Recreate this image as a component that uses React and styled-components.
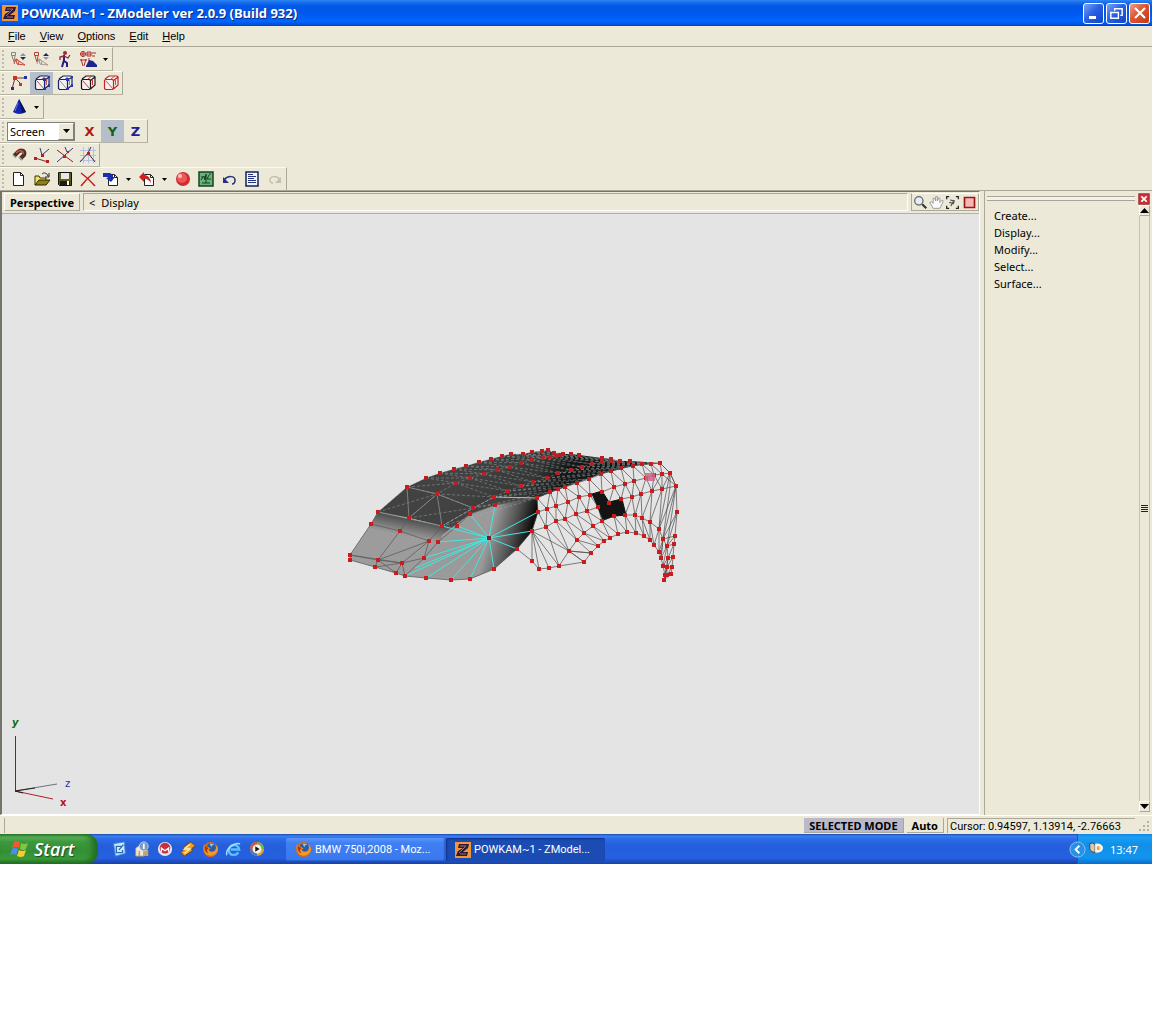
import styled, { createGlobalStyle } from "styled-components";

const GlobalStyle = createGlobalStyle`
  * {
    box-sizing: border-box;
  }
  body {
    margin: 0;
    background: #ffffff;
    font-family: "Noto Sans", "Open Sans", sans-serif;
    font-size: 11px;
    color: #000000;
  }
  button,
  select {
    font: inherit;
    color: inherit;
    margin: 0;
    padding: 0;
    border: 0;
    background: none;
    border-radius: 0;
  }
  svg {
    display: block;
    flex: none;
  }
`;

const Window = styled.div`
  display: flex;
  flex-direction: column;
  background: #ece9d8;
`;

const TitleBar = styled.header`
  display: flex;
  align-items: center;
  height: 26px;
  padding: 0 2px 0 2px;
  gap: 3px;
  background: linear-gradient(#2a86f2 0, #1e72ee 2px, #0058e6 6px, #0058ee 14px, #0066ff 21px, #0054e0 24px, #0040c0 26px);
`;

const Title = styled.h1`
  flex: 1;
  margin: 0;
  font-family: "Noto Sans", sans-serif;
  font-size: 13px;
  font-weight: 700;
  color: #ffffff;
  text-shadow: 1px 1px 0 #0a2a86;
  white-space: nowrap;
`;

const Caption = styled.div`
  display: flex;
  gap: 2px;
`;

const CaptionButton = styled.button`
  display: flex;
  align-items: center;
  justify-content: center;
  width: 21px;
  height: 21px;
  border: 1px solid #ffffff;
  border-radius: 3px;
  background: ${(props) =>
    props.$close
      ? "linear-gradient(135deg, #eda088, #dc5530 45%, #c03c14)"
      : "linear-gradient(135deg, #7ba4f5, #2a62e4 45%, #0f44c8)"};
`;

const MenuBar = styled.nav`
  display: flex;
  height: 21px;
  padding: 0 0 1px 1px;
  font-family: "Liberation Sans", Arial, sans-serif;
  border-bottom: 1px solid #aca899;
`;

const MenuItem = styled.button`
  padding: 0 7px;
`;

const Toolbars = styled.div`
  display: flex;
  flex-direction: column;
  align-items: flex-start;
  height: 143px;
`;

const Toolbar = styled.div`
  display: flex;
  align-items: center;
  height: 24px;
  flex: none;
  border-right: 1px solid #aca899;
  border-bottom: 1px solid #b8b4a4;
  border-top: 1px solid #fbfaf4;
`;

const Grip = styled.span`
  width: 7px;
  height: 20px;
  background: radial-gradient(circle at 3px 2px, #c0bcac 1px, transparent 1px);
  background-size: 7px 4px;
`;

const Tool = styled.button`
  display: flex;
  align-items: center;
  justify-content: center;
  width: 23px;
  height: 22px;
  background: ${(props) => (props.$active ? "#b5bfcc" : "none")};
`;

const Drop = styled.button`
  display: flex;
  align-items: center;
  justify-content: center;
  width: 13px;
  height: 22px;
`;

const Axis = styled.span`
  font-family: "DejaVu Sans", sans-serif;
  font-size: 13px;
  font-weight: 700;
  color: ${(props) => props.$color};
`;

const SelectBox = styled.div`
  display: flex;
  position: relative;
  width: 68px;
  height: 19px;
  margin-right: 3px;
  border: 1px solid #808080;
  background: #ffffff;
`;

const Select = styled.select`
  appearance: none;
  width: 100%;
  padding: 0 0 0 2px;
  outline: none;
`;

const SelectArrow = styled.span`
  position: absolute;
  right: 0;
  top: 0;
  bottom: 0;
  display: flex;
  align-items: center;
  justify-content: center;
  width: 16px;
  pointer-events: none;
  background: #ece9d8;
  border: 1px solid;
  border-color: #ffffff #808080 #808080 #ffffff;
`;

const Main = styled.main`
  display: flex;
  height: 625px;
  border-top: 1px solid #aca899;
`;

const View = styled.section`
  flex: 1;
  min-width: 0;
  display: flex;
  flex-direction: column;
  border: 1px solid #76746a;
  border-left-width: 2px;
  border-right-color: #ffffff;
  border-bottom-color: #ffffff;
  margin-right: 4px;
`;

const ViewHeader = styled.div`
  display: flex;
  gap: 3px;
  height: 22px;
  padding: 1px 0 2px 2px;
  border-bottom: 1px solid #b4b1a4;
`;

const ViewName = styled.button`
  width: 76px;
  border: 1px solid;
  border-color: #ffffff #aca899 #aca899 #ffffff;
  font-weight: 700;
`;

const ViewPath = styled.div`
  flex: 1;
  display: flex;
  align-items: center;
  gap: 6px;
  padding-left: 5px;
  border: 1px solid;
  border-color: #aca899 #ffffff #ffffff #aca899;
`;

const ViewTools = styled.div`
  display: flex;
  border: 1px solid;
  border-color: #ffffff #aca899 #aca899 #aca899;
`;

const ViewTool = styled.button`
  display: flex;
  align-items: center;
  justify-content: center;
  width: ${(props) => (props.$wide ? 18 : 16)}px;
`;

const Canvas = styled.div`
  flex: 1;
  position: relative;
  overflow: hidden;
  background: #e4e4e4;
`;

const Model = styled.svg`
  position: absolute;
  left: 338px;
  top: 226px;
`;

const AxisMark = styled.svg`
  position: absolute;
  left: 0;
  bottom: 0;
`;

const Side = styled.aside`
  display: flex;
  width: 168px;
  flex: none;
  padding: 2px 2px 3px 0;
  border-left: 1px solid #aca899;
`;

const SideBody = styled.div`
  flex: 1;
  padding: 3px 3px 0 2px;
`;

const SideGrip = styled.div`
  height: 5px;
  border: 1px solid #a8a598;
  border-width: 1px 0;
  background: #f4f2e8;
`;

const Commands = styled.ul`
  list-style: none;
  margin: 6px 0 0;
  padding: 0 0 0 7px;
`;

const Command = styled.button`
  display: block;
  height: 17px;
  line-height: 17px;
`;

const Scroll = styled.div`
  display: flex;
  flex-direction: column;
  justify-content: space-between;
  align-items: center;
  width: 12px;
`;

const ScrollTrack = styled.div`
  flex: 1;
  display: flex;
  flex-direction: column;
  justify-content: space-between;
  align-items: center;
  width: 11px;
  border: 1px solid #c6c3b4;
  border-width: 0 1px;
`;

const ScrollButton = styled.button`
  display: flex;
  align-items: center;
  justify-content: center;
  width: 11px;
  height: 11px;
  border: 1px solid;
  border-color: #ffffff #aca899 #aca899 #ffffff;
`;

const StatusBar = styled.footer`
  display: flex;
  height: 19px;
  gap: 3px;
  padding: 2px 2px 1px 4px;
  border-top: 1px solid #ffffff;
`;

const StatusHint = styled.div`
  flex: 1;
  border-left: 1px solid #aca899;
`;

const StatusMode = styled.button`
  padding: 0 5px;
  line-height: 15px;
  font-weight: 700;
  background: ${(props) => (props.$on ? "#b9b9c9" : "none")};
  border-right: 1px solid #aca899;
  border-bottom: 1px solid #aca899;
`;

const StatusCursor = styled.div`
  width: 188px;
  padding-left: 2px;
  line-height: 15px;
  font-family: Roboto, "Liberation Sans", sans-serif;
  white-space: nowrap;
  border-left: 1px solid #aca899;
  border-top: 1px solid #aca899;
`;

const Taskbar = styled.footer`
  display: flex;
  height: 30px;
  color: #ffffff;
  background: linear-gradient(#1c49a8 0, #3a80f0 2px, #2d6be8 5px, #245edb 12px, #2460e0 24px, #1941a5 30px);
`;

const Start = styled.button`
  display: flex;
  align-items: center;
  gap: 5px;
  width: 98px;
  padding-left: 10px;
  border-radius: 0 12px 12px 0;
  font-family: "Open Sans", sans-serif;
  font-size: 18px;
  line-height: 28px;
  font-style: italic;
  font-weight: 600;
  text-shadow: 1px 1px 1px #1c4a1c;
  background: linear-gradient(#2f7a2f 0, #5fb55f 3px, #3c983c 8px, #348f34 18px, #3a9c3a 25px, #256b25 30px);
  box-shadow: inset -5px 0 6px #226b22;
`;

const QuickLaunch = styled.div`
  display: flex;
  align-items: center;
  width: 188px;
  padding-left: 9px;
`;

const QuickButton = styled.button`
  display: flex;
  align-items: center;
  justify-content: center;
  width: 23px;
  height: 24px;
`;

const Task = styled.button`
  display: flex;
  align-items: center;
  gap: 3px;
  width: 159px;
  height: 23px;
  margin: 4px 1px 0 0;
  padding-left: 9px;
  border-radius: 2px;
  font-family: Roboto, sans-serif;
  color: #ffffff;
  white-space: nowrap;
  background: ${(props) => (props.$active ? "#1b4cb4" : "linear-gradient(#5a97fa, #3f7ff2 5px, #3a78ee)")};
  box-shadow: ${(props) => (props.$active ? "inset 1px 1px 2px #10328a" : "inset -1px -1px 1px #2a5fd0")};
`;

const Tray = styled.div`
  display: flex;
  align-items: center;
  margin-left: auto;
`;

const TrayFill = styled.div`
  display: flex;
  align-items: center;
  gap: 6px;
  align-self: stretch;
  width: 75px;
  margin-left: -9px;
  padding-left: 10px;
  border-left: 1px solid #0f5cc0;
  background: linear-gradient(#1280e0 0, #1aa0f4 3px, #1290e8 10px, #1294ee 24px, #0c6cc8 30px);
`;

const TrayToggle = styled.button`
  display: flex;
  position: relative;
  z-index: 1;
`;

function Icon({ size = 18, children }) {
  return (
    <svg width={size} height={size} viewBox="0 0 18 18" fill="none" aria-hidden="true">
      {children}
    </svg>
  );
}

const Triangle = () => (
  <svg width="5" height="3" viewBox="0 0 5 3" aria-hidden="true">
    <path d="M0 0h5L2.500 3z" fill="#000" />
  </svg>
);

const ScrollArrow = ({ down }) => (
  <svg width="9" height="5" viewBox="0 0 9 5" aria-hidden="true">
    <path d={down ? "M0 0h9L4.500 5z" : "M0 5h9L4.500 0z"} fill="#000" />
  </svg>
);

const ZLogo = () => (
  <svg width="16" height="16" viewBox="0 0 16 16" aria-hidden="true">
    <rect width="16" height="16" fill="#f0953a" />
    <path d="M4 2h10l-1 4-5 4h5l-1 4H1l2-5 5-3H3z" fill="#2a1a3c" />
    <path d="M5 4h6L4 11M5 12h6" stroke="#b06c4c" fill="none" />
  </svg>
);

const Pivot = ({ pin, wedge, up, down }) => (
  <Icon>
    <path d="M1.500 2.500h4v3h-4zM2 6l2 6 1-6" stroke={pin} />
    <path d="M4 14l2-5 2 1M6 9l9 6-8-1zM8 15l1-4" stroke={wedge} />
    <path d="M13 3l3 3h-6z" fill={up} />
    <path d="M10 7h6l-3 3z" fill={down} />
  </Icon>
);

const Cube = ({ edge, front, corner }) => (
  <Icon>
    <path d="M2.500 6.500l1-1h7l1 1v8l-1 1h-7l-1-1zM3 5l4-3h8l1 1-4.500 3.500M16 3v8l-4.500 4" fill="#f4f2ee" stroke={edge} strokeWidth="1.200" />
    <path d="M4 7l7 8M9 5l4-3M13.500 5v6" stroke={front} />
    {corner && <path d="M10 4h3v3h-3zM15 10h2v3h-2zM15 2h2v2h-2zM10 14h3v2h-3z" fill={corner} />}
  </Icon>
);

const Page = ({ arrow }) => (
  <>
    <path d="M6.500 4.500h6l3 3v8h-9z" fill="#fff" stroke="#222" />
    <path d="M12.500 4.500v3h3" stroke="#222" />
    <path d={arrow.d} fill={arrow.fill} />
  </>
);

const Firefox = () => (
  <Icon size={17}>
    <circle cx="9" cy="9" r="8" fill="#e06818" />
    <circle cx="10" cy="7" r="5" fill="#2c5ca8" />
    <path d="M8 3c2-1 4 0 5 1-2 0-3 1-3 3z" fill="#8fc8e8" />
    <path d="M2 4c1 2 3 2 4 2l3 2-2 1c1 3 4 3 7 1 1-2 1-4 0-6 3 2 4 6 1 9-4 4-10 3-12-1-1-3-2-5-1-8z" fill="#f39a26" />
    <path d="M3 5l3 2 1 1-2 2 2 3c-4-1-5-5-4-8z" fill="#b03c10" />
  </Icon>
);

const Explorer = () => (
  <Icon size={17}>
    <path d="M14 12c-2 4-9 4-10-2 0-7 10-8 11-1H6" stroke="#5cc0ff" strokeWidth="2.500" />
    <path d="M2 15C0 9 10 1 16 3" stroke="#a8e0ff" strokeWidth="1.500" />
  </Icon>
);

const Flag = () => (
  <svg width="19" height="18" viewBox="0 0 19 18" aria-hidden="true">
    <path d="M4 2q3-2 6 0L9 8Q6 6 2 8z" fill="#f05a28" />
    <path d="M11 3q3 2 7 0l-2 6q-3 2-6 0z" fill="#86c440" />
    <path d="M2 9q3-2 6 0l-2 6q-3-2-6 0z" fill="#4a8cf0" />
    <path d="M9 10q3 2 7 0l-2 6q-3 2-7 0z" fill="#f8cc30" />
  </svg>
);

// hood rows, nose to windscreen
const hoodRows = [
  [[378, 512], [407, 487], [426, 478], [440, 473], [454, 469], [466, 466], [479, 462], [491, 459], [502, 456], [511, 454], [523, 454], [532, 452], [542, 451], [548, 450]],
  [[409, 518], [437, 494], [456, 483], [470, 478], [484, 474], [497, 470], [510, 467], [521, 463], [532, 460], [543, 458], [550, 457], [556, 456], [560, 455], [563, 454]],
  [[442, 526], [473, 508], [494, 497], [508, 491], [521, 486], [533, 482], [547, 478], [558, 473], [571, 470], [582, 467], [592, 464], [602, 462], [611, 461], [620, 461]],
  [[494, 497], [537, 498], [550, 492], [565, 487], [577, 483], [589, 479], [601, 474], [611, 471], [621, 468], [633, 466], [642, 464], [651, 464], [660, 463]],
];

const windscreenEdge = [[548, 450], [554, 453], [563, 454], [571, 454], [579, 455], [602, 458], [611, 459], [620, 461], [630, 461], [660, 463]];

// fender rows, bonnet line down to the wheel arch
const fenderRows = [
  [[537, 498], [550, 492], [558, 489], [565, 487], [577, 483], [589, 479], [601, 474], [611, 471], [621, 468], [633, 466], [642, 464], [651, 464], [660, 463], [670, 473]],
  [[538, 512], [547, 509], [556, 506], [568, 502], [579, 497], [590, 495], [602, 492], [614, 487], [625, 484], [634, 481], [646, 478], [654, 475], [662, 474], [670, 473]],
  [[532, 531], [546, 527], [556, 521], [565, 519], [576, 514], [587, 511], [598, 507], [609, 503], [621, 499], [632, 497], [641, 494], [652, 491], [662, 489], [676, 486]],
];

const upperArch = [[569, 551], [577, 540], [584, 533], [593, 526], [602, 521], [614, 516], [625, 515], [635, 515], [642, 518], [650, 522], [659, 529], [663, 539], [667, 546], [668, 558], [667, 567], [667, 575]];
const lowerArch = [[584, 562], [591, 553], [598, 546], [604, 541], [610, 538], [618, 534], [627, 532], [636, 533], [644, 536], [650, 540], [654, 545], [659, 552], [661, 558], [663, 566], [665, 575], [664, 580]];
const rearEdge = [[670, 473], [676, 486], [677, 512], [675, 536], [674, 544], [673, 557], [672, 567], [671, 574], [664, 580]];
const frontEdge = [[517, 549], [532, 561], [539, 569], [549, 568], [559, 566], [584, 562]];

const nose = [[350, 555], [350, 560], [371, 524], [400, 531], [429, 541], [438, 542], [457, 526], [470, 514], [495, 505], [378, 560], [375, 567], [402, 563], [424, 558], [396, 573], [405, 576], [426, 578], [451, 580], [470, 579], [494, 569], [517, 549]];

const fanEnds = [[442, 526], [457, 526], [438, 542], [424, 558], [405, 576], [426, 578], [451, 580], [470, 579], [494, 569], [517, 549], [532, 531], [538, 512], [495, 505], [470, 514], [415, 568]];

const line = (points) => "M" + points.map((p) => p.join(" ")).join("L");

const strip = (a, b) =>
  a
    .slice(0, b.length)
    .map((p, i) => line([p, b[i]]) + (b[i + 1] ? line([p, b[i + 1]]) : ""))
    .join("");

const mesh = (rows) => rows.map(line).join("") + rows.slice(1).map((row, i) => strip(rows[i], row)).join("");

const dots = [...hoodRows, ...fenderRows, upperArch, lowerArch, rearEdge, frontEdge, nose, windscreenEdge].flat();

const noseLines =
  "M350 560L350 555L371 524L378 512M371 524L400 531L429 541L442 526M400 531L409 518M400 531L378 560L350 555M350 560L375 567L396 573L405 576L426 578L451 580L470 579L494 569L517 549" +
  "M378 560L402 563L424 558L429 541L378 560L375 567M378 560L396 573L402 563L429 541M402 563L405 576L424 558L438 542L457 526L470 514L495 505L537 498M350 555L402 563M375 567L402 563";

const fenderLines =
  "M532 531L517 549M532 531L532 561M532 531L539 569M532 531L549 568M532 531L559 566M532 531L569 551M546 527L559 566L569 551L584 562M546 527L569 551L591 553M556 521L569 551M556 521L577 540M565 519L577 540M565 519L584 533M576 514L584 533M576 514L593 526M587 511L593 526M587 511L602 521M598 507L602 521" +
  "M621 499L625 515M632 497L625 515M632 497L635 515M641 494L635 515M641 494L642 518M652 491L642 518M652 491L650 522M662 489L650 522M662 489L659 529L676 486L663 539L677 512L667 546L675 536M663 539L675 536M667 546L674 544L668 558L673 557L667 567L672 567L664 580" +
  "M662 474L652 491M670 473L659 529M662 489L670 473L670 487M676 486L667 546M670 487L663 539L661 558";

function CarMesh() {
  return (
    <Model width="346" height="150" viewBox="340 440 346 150" role="img" aria-label="Car fender mesh">
      <defs>
        <linearGradient id="hood" gradientUnits="userSpaceOnUse" x1="470" y1="470" x2="545" y2="510">
          <stop offset="0" stopColor="#424242" />
          <stop offset="0.700" stopColor="#363636" />
          <stop offset="1" stopColor="#161616" />
        </linearGradient>
        <linearGradient id="nose" gradientUnits="userSpaceOnUse" x1="410" y1="516" x2="406" y2="536">
          <stop offset="0" stopColor="#424242" />
          <stop offset="1" stopColor="#9c9c9c" />
        </linearGradient>
        <linearGradient id="corner" gradientUnits="userSpaceOnUse" x1="490" y1="532" x2="534" y2="544">
          <stop offset="0" stopColor="#111" stopOpacity="0" />
          <stop offset="0.450" stopColor="#111" stopOpacity="0.500" />
          <stop offset="0.850" stopColor="#0c0c0c" />
        </linearGradient>
      </defs>
      <path d="M350 560L350 555L371 524L378 512L442 526L473 508L494 497L537 498L538 512L532 531L517 549L494 569L470 579L451 580L426 578L405 576L375 567Z" fill="url(#nose)" />
      <path d="M442 535L470 514L495 505L537 498L538 512L532 531L517 549L494 569L470 579L430 576Z" fill="#9a9a9a" />
      <path d="M495 505L537 498L538 512L532 531L517 549L494 569L470 579L470 514Z" fill="url(#corner)" />
      <path d={line([...hoodRows[0], ...windscreenEdge, [633, 466], [601, 474], [565, 487], [537, 498], [494, 497], [473, 508], [442, 526], [409, 518]]) + "Z"} fill="url(#hood)" />
      <path d={mesh(hoodRows)} fill="none" stroke="#a4bab8" strokeOpacity="0.600" strokeWidth="0.700" strokeDasharray="3 2" />
      <path d="M407 487L409 518M409 518L437 494M437 494L442 526M378 512L442 526M437 494L473 508M437 494L407 487" fill="none" stroke="#8a9090" strokeWidth="0.800" />
      <path d="M494 497L537 498" fill="none" stroke="#c8c8c8" strokeWidth="0.800" />
      <path d={noseLines} fill="none" stroke="#5d5d5d" strokeWidth="0.800" />
      <path d={mesh(fenderRows) + line(upperArch) + line(lowerArch) + strip(upperArch, lowerArch) + line(rearEdge) + line(frontEdge) + fenderLines} fill="none" stroke="#4c4c4c" strokeWidth="0.700" />
      <path d="M592 494L602 491L609 502L622 499L626 515L614 516L603 520L598 507Z" fill="#141414" stroke="#141414" />
      <path d={fanEnds.map((p) => line([[489, 538], p])).join("")} stroke="#40e8e0" fill="none" strokeWidth="1" />
      {dots.map(([x, y], i) => (
        <rect key={i} x={x - 2} y={y - 2} width="4" height="4" fill={y < 486 && x < 640 ? "#b42024" : "#cc1a1e"} />
      ))}
      <path d="M645 473h10v8h-10z" fill="#c8688c" fillOpacity="0.850" />
      <path d="M487 536h4v4h-4z" fill="#7a1c28" />
    </Model>
  );
}

const menus = ["File", "View", "Options", "Edit", "Help"];
const commands = ["Create...", "Display...", "Modify...", "Select...", "Surface..."];

const App = () => {
  return (
    <>
      <GlobalStyle />
      <Window>
        <TitleBar>
          <ZLogo />
          <Title>POWKAM~1 - ZModeler ver 2.0.9 (Build 932)</Title>
          <Caption>
            <CaptionButton aria-label="Minimize">
              <Icon><path d="M4 12h7v3H4z" fill="#fff" /></Icon>
            </CaptionButton>
            <CaptionButton aria-label="Restore">
              <Icon size={17}>
                <path d="M7 6V4h8v7h-2M7 4h8" stroke="#fff" strokeWidth="1.500" />
                <path d="M3 8h8v6H3zM3 8h8" stroke="#fff" strokeWidth="1.500" />
              </Icon>
            </CaptionButton>
            <CaptionButton $close aria-label="Close">
              <Icon><path d="M4 4l10 10M14 4L4 14" stroke="#fff" strokeWidth="2.200" /></Icon>
            </CaptionButton>
          </Caption>
        </TitleBar>

        <MenuBar>
          {menus.map((name) => (
            <MenuItem key={name}>
              <u>{name[0]}</u>
              {name.slice(1)}
            </MenuItem>
          ))}
        </MenuBar>

        <Toolbars>
          <Toolbar>
            <Grip />
            <Tool aria-label="Local pivot"><Pivot pin="#8c8478" wedge="#c84838" up="#8a93a8" down="#1c2c60" /></Tool>
            <Tool aria-label="World pivot"><Pivot pin="#b84030" wedge="#a89890" up="#1c2850" down="#9a9aa4" /></Tool>
            <Tool aria-label="Animate">
              <Icon>
                <circle cx="9" cy="3" r="2" fill="#a02830" />
                <path d="M8 5v6l3 2v4M8 10l-2 7" stroke="#2a1c80" strokeWidth="2" />
                <path d="M8 6l4 2 2-3M8 6L4 7v3" stroke="#8c2848" strokeWidth="1.300" />
              </Icon>
            </Tool>
            <Tool aria-label="Objects">
              <Icon>
                <circle cx="4" cy="4" r="2.500" stroke="#b02828" />
                <path d="M1 4h6M4 1v6M8 2h4v4H8zM8 4h4M13 3h4M13 6h3M2 9l2 7M7 9l-2 7M1 10h7M10 8v3" stroke="#b02828" />
                <path d="M7 16l3-6 4 1 4 4v2H7z" fill="#1c2490" />
              </Icon>
            </Tool>
            <Drop aria-label="More objects"><Triangle /></Drop>
          </Toolbar>
          <Toolbar>
            <Grip />
            <Tool aria-label="Vertices">
              <Icon>
                <path d="M2 15L5 4L16 4M5 4l6 6" stroke="#70303c" />
                <path d="M3 2h4v4H3zM9 9h3v3H9z" fill="#d03028" />
                <path d="M1 13h3v3H1zM14 2h3v3h-3z" fill="#2030a0" />
              </Icon>
            </Tool>
            <Tool $active aria-label="Edges"><Cube edge="#1c2468" front="#b06050" corner="#28389c" /></Tool>
            <Tool aria-label="Faces"><Cube edge="#1c2468" front="#8c8c9c" corner="#2c3cb0" /></Tool>
            <Tool aria-label="Polygons"><Cube edge="#201818" front="#c83830" /></Tool>
            <Tool aria-label="Solids"><Cube edge="#c82424" front="#d05050" /></Tool>
          </Toolbar>
          <Toolbar>
            <Grip />
            <Tool aria-label="Cone">
              <Icon>
                <path d="M9 1l7 13q-7 4-13 0z" fill="#1424b0" />
                <path d="M9 1l3 14 4-1z" fill="#0a1260" />
                <path d="M8 5l-3 8" stroke="#6878e0" />
              </Icon>
            </Tool>
            <Drop aria-label="More shapes"><Triangle /></Drop>
          </Toolbar>
          <Toolbar>
            <Grip />
            <SelectBox>
              <Select aria-label="Coordinate system" defaultValue="Screen">
                <option>Screen</option>
                <option>World</option>
              </Select>
              <SelectArrow>
                <svg width="7" height="4" viewBox="0 0 7 4"><path d="M0 0h7L3.500 4z" /></svg>
              </SelectArrow>
            </SelectBox>
            <Tool><Axis $color="#b01818">X</Axis></Tool>
            <Tool $active><Axis $color="#186018">Y</Axis></Tool>
            <Tool><Axis $color="#18209c">Z</Axis></Tool>
          </Toolbar>
          <Toolbar>
            <Grip />
            <Tool aria-label="Snap">
              <Icon>
                <path d="M4 10l4-4c3-3 8-1 6 3l-4 4" stroke="#50302c" strokeWidth="4" />
                <path d="M6 7l3-2c3-1 5 1 4 3" stroke="#c85844" strokeWidth="1.500" />
                <path d="M3 9l3 3M9 11l3 3" stroke="#a4a8a8" strokeWidth="1.500" />
              </Icon>
            </Tool>
            <Tool aria-label="Snap to vertex">
              <Icon>
                <path d="M7 2l2 7 7-6" stroke="#30307c" />
                <path d="M2 12l13 4" stroke="#802828" />
                <path d="M1 11h3v3H1zM13 14h3v3h-3zM8 8h3v3H8z" fill="#b02020" />
              </Icon>
            </Tool>
            <Tool aria-label="Snap to edge">
              <Icon>
                <path d="M1 4l16 12" stroke="#901c28" />
                <path d="M1 16L17 2M9 1l2 5" stroke="#383888" />
                <path d="M7 9h3v3H7zM11 5h2v2h-2z" fill="#c02020" />
              </Icon>
            </Tool>
            <Tool aria-label="Snap to grid">
              <Icon>
                <path d="M4.500 1v16M9.500 1v16M14.500 1v16M1 4.500h16M1 9.500h16M1 14.500h16" stroke="#b8c0dc" />
                <path d="M1 16l8-9 7 9M9 7l3-6" stroke="#30306c" />
                <path d="M8 6h3v3H8z" fill="#c02020" />
              </Icon>
            </Tool>
          </Toolbar>
          <Toolbar>
            <Grip />
            <Tool aria-label="New">
              <Icon>
                <path d="M3.500 2.500h7l3 3v10h-10z" fill="#fff" stroke="#222" />
                <path d="M10.500 2.500v3h3" stroke="#222" />
              </Icon>
            </Tool>
            <Tool aria-label="Open">
              <Icon>
                <path d="M2 15V6h4l1 2h6v2" fill="#f0e070" stroke="#3c3400" />
                <path d="M2 15l4-5h11l-4 5z" fill="#8c8018" stroke="#2c2800" />
                <path d="M9 4c2-2 5-1 6 2M16 3v4h-4" stroke="#222" />
              </Icon>
            </Tool>
            <Tool aria-label="Save">
              <Icon>
                <path d="M2.500 2.500h13v13h-12l-1-1z" fill="#5c6018" stroke="#111" />
                <path d="M5 3h8v6H5z" fill="#e8e8e8" />
                <path d="M4 11h10v4H4z" fill="#1c1c1c" />
                <path d="M11 11h2v4h-2z" fill="#fff" />
              </Icon>
            </Tool>
            <Tool aria-label="Delete">
              <Icon><path d="M2 3q7 5 14 13M16 2Q8 8 2 16" stroke="#c81c1c" strokeWidth="1.500" /></Icon>
            </Tool>
            <Tool aria-label="Import">
              <Icon><Page arrow={{ d: "M1 3h7l3 2v2h2l-4 5-5-4h2L5 7H1z", fill: "#1830b0" }} /></Icon>
            </Tool>
            <Drop aria-label="Import options"><Triangle /></Drop>
            <Tool aria-label="Export">
              <Icon><Page arrow={{ d: "M1 7l5-5v3q6 0 7 8-4-5-7-4v3z", fill: "#d02020" }} /></Icon>
            </Tool>
            <Drop aria-label="Export options"><Triangle /></Drop>
            <Tool aria-label="Materials">
              <Icon>
                <circle cx="9" cy="9" r="7" fill="#d02c30" />
                <circle cx="8" cy="8" r="5" fill="#ec5858" />
                <circle cx="6" cy="6" r="2" fill="#ffc4bc" />
              </Icon>
            </Tool>
            <Tool aria-label="Textures">
              <Icon>
                <path d="M2 2h14v14H2z" fill="#68b478" stroke="#184020" strokeWidth="1.500" />
                <path d="M4 10l3-4 1 4 1-6v9M12 5l-2 4h4M4 7h2M12 4h2M5 13h8" stroke="#143c20" />
              </Icon>
            </Tool>
            <Tool aria-label="Undo">
              <Icon>
                <path d="M4 10c4-5 11-4 11 0 0 2-1 4-3 4" stroke="#24347c" strokeWidth="1.500" />
                <path d="M3 7v6h6z" fill="#24347c" />
              </Icon>
            </Tool>
            <Tool aria-label="Properties">
              <Icon>
                <path d="M3 2h12v14H3z" fill="#f0f4ff" stroke="#142058" strokeWidth="1.500" />
                <path d="M5 4.500h5M5 6.500h8M5 8.500h6M5 10.500h8M5 12.500h8" stroke="#24347c" />
              </Icon>
            </Tool>
            <Tool aria-label="Redo" disabled>
              <Icon>
                <path d="M14 10c-3-5-10-4-10 0 0 2 1 3 3 3" stroke="#c4c0b0" strokeWidth="1.500" />
                <path d="M15 7v6H9z" fill="#c4c0b0" />
              </Icon>
            </Tool>
          </Toolbar>
        </Toolbars>

        <Main>
          <View>
            <ViewHeader>
              <ViewName>Perspective</ViewName>
              <ViewPath>
                <span>&lt;</span>
                <span>Display</span>
              </ViewPath>
              <ViewTools>
                <ViewTool aria-label="Zoom">
                  <Icon size={15}>
                    <path d="M11 11l5 5" stroke="#333" strokeWidth="2.500" />
                    <circle cx="7" cy="7" r="5" fill="#e4ecf4" stroke="#666" strokeWidth="1.500" />
                  </Icon>
                </ViewTool>
                <ViewTool aria-label="Pan">
                  <Icon size={15}>
                    <path d="M5 16L1 9l2-1 2 2V4h2l1 3V2h2v5l2-4 1 1v5l3-3 1 2-4 8z" fill="#fafafa" stroke="#8c8c8c" />
                  </Icon>
                </ViewTool>
                <ViewTool aria-label="Fit">
                  <Icon size={15}>
                    <path d="M2 5V2h3M13 2h3v3M16 13v3h-3M5 16H2v-3" stroke="#222" strokeWidth="1.500" />
                    <path d="M7 13l3-5M6 6l5 1-1 4M5 9h3" stroke="#555" strokeWidth="1.500" />
                  </Icon>
                </ViewTool>
                <ViewTool $wide aria-label="Maximize">
                  <Icon size={15}>
                    <path d="M3 3h12v12H3z" fill="#f4b8b4" stroke="#9c1418" strokeWidth="2" />
                  </Icon>
                </ViewTool>
              </ViewTools>
            </ViewHeader>
            <Canvas>
              <CarMesh />
              <AxisMark width="84" height="104" viewBox="0 0 84 104" fontFamily="DejaVu Sans, sans-serif" fontSize="10">
                <path d="M13.500 26v55" stroke="#245024" />
                <path d="M13 81l42-7" stroke="#707080" />
                <path d="M13 81l38 8" stroke="#b02024" />
                <path d="M13 81l20-3M13 81l8 2" stroke="#222" />
                <text x="10" y="16" fill="#146c14" fontWeight="700" fontStyle="italic">y</text>
                <text x="63" y="77" fill="#2c2cb4">z</text>
                <text x="58" y="96" fill="#b41414" fontWeight="700">x</text>
              </AxisMark>
            </Canvas>
          </View>
          <Side>
            <SideBody>
              <SideGrip />
              <Commands>
                {commands.map((name) => (
                  <li key={name}>
                    <Command>{name}</Command>
                  </li>
                ))}
              </Commands>
            </SideBody>
            <Scroll>
              <button aria-label="Close panel">
                <Icon size={12}>
                  <path d="M1 1h16v16H1z" fill="#cc3038" stroke="#8c1820" />
                  <path d="M5 5l8 8M13 5l-8 8" stroke="#fff" strokeWidth="2.500" />
                </Icon>
              </button>
              <ScrollTrack>
                <ScrollButton aria-label="Scroll up"><ScrollArrow /></ScrollButton>
                <svg width="7" height="7" viewBox="0 0 7 7" aria-hidden="true">
                  <path d="M0 0h7v1H0zM0 2h7v1H0zM0 4h7v1H0zM0 6h7v1H0z" fill="#222" />
                </svg>
                <ScrollButton aria-label="Scroll down"><ScrollArrow down /></ScrollButton>
              </ScrollTrack>
            </Scroll>
          </Side>
        </Main>

        <StatusBar>
          <StatusHint />
          <StatusMode $on>SELECTED MODE</StatusMode>
          <StatusMode>Auto</StatusMode>
          <StatusCursor>Cursor: 0.94597, 1.13914, -2.76663</StatusCursor>
          <svg width="12" height="15" viewBox="0 0 12 15" aria-hidden="true">
            <path d="M9 3h2v2H9zM9 7h2v2H9zM9 11h2v2H9zM5 7h2v2H5zM5 11h2v2H5zM1 11h2v2H1z" fill="#b4b1a0" />
          </svg>
        </StatusBar>
      </Window>

      <Taskbar>
        <Start>
          <Flag />
          Start
        </Start>
        <QuickLaunch>
          <QuickButton aria-label="Show desktop">
            <Icon size={16}>
              <path d="M3 3l12-2 1 13-11 3z" fill="#cce8ff" stroke="#4c8cd0" />
              <path d="M12 6H6v7h7v-3M9 10l5-6" stroke="#2c6cb4" strokeWidth="1.500" />
            </Icon>
          </QuickButton>
          <QuickButton aria-label="Home">
            <Icon size={16}>
              <path d="M2 8l4-3 5 3v9H2z" fill="#f0ecd8" stroke="#b09868" />
              <path d="M5 11h2v6H5zM11 10h5v7h-5z" fill="#c8a468" />
              <circle cx="11" cy="6" r="5" fill="#7498c8" stroke="#c8d8ec" />
              <path d="M11 3v6" stroke="#fff" strokeWidth="2" />
            </Icon>
          </QuickButton>
          <QuickButton aria-label="Mail">
            <Icon size={16}>
              <circle cx="9" cy="9" r="8" fill="#e8e8ec" />
              <circle cx="9" cy="8" r="6" fill="#c83040" />
              <path d="M5 12V8l4 3 4-3v4" stroke="#fff" strokeWidth="1.500" />
            </Icon>
          </QuickButton>
          <QuickButton aria-label="Winamp">
            <Icon size={16}>
              <path d="M12 1l5 4-4 4 1 2-9 6-4-4 4-4-1-2z" fill="#f0a028" stroke="#6c3c10" />
              <path d="M11 4L5 9h6l-6 5" stroke="#fff4b0" strokeWidth="1.500" />
            </Icon>
          </QuickButton>
          <QuickButton aria-label="Firefox"><Firefox /></QuickButton>
          <QuickButton aria-label="Internet Explorer"><Explorer /></QuickButton>
          <QuickButton aria-label="Media Player">
            <Icon size={16}>
              <circle cx="9" cy="9" r="8" fill="#e8a038" />
              <path d="M9 1a8 8 0 0 0-8 8h8z" fill="#d05840" />
              <path d="M9 1a8 8 0 0 1 8 8H9z" fill="#70b048" />
              <path d="M1 9a8 8 0 0 0 8 8V9z" fill="#4c78c8" />
              <circle cx="9" cy="9" r="5" fill="#f4f4e8" />
              <path d="M7 6l5 3-5 3z" fill="#181818" />
            </Icon>
          </QuickButton>
        </QuickLaunch>
        <Task>
          <Firefox />
          BMW 750i,2008 - Moz...
        </Task>
        <Task $active>
          <ZLogo />
          POWKAM~1 - ZModel...
        </Task>
        <Tray>
          <TrayToggle aria-label="Show hidden icons">
            <Icon size={17}>
              <circle cx="9" cy="9" r="8" fill="#2890e8" stroke="#8cc8f8" />
              <path d="M11 5L7 9l4 4" stroke="#fff" strokeWidth="2" />
            </Icon>
          </TrayToggle>
          <TrayFill>
            <Icon size={16}>
              <path d="M2 3q3-2 6 1v9q-5 0-6-4z" fill="#d8c8b0" stroke="#403830" />
              <path d="M8 3q8-1 9 5-1 6-9 5z" fill="#fbf6e8" />
              <path d="M10 6h3v4h-3z" fill="#e8a040" />
            </Icon>
            <time>13:47</time>
          </TrayFill>
        </Tray>
      </Taskbar>
    </>
  );
};

export default App;
